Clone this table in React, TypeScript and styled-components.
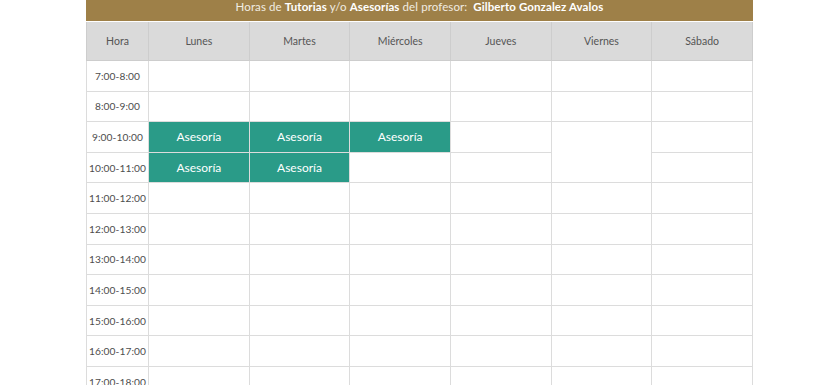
import * as React from 'react';
import styled, { createGlobalStyle } from 'styled-components';

const GlobalStyle = createGlobalStyle`
  html, body {
    margin: 0;
    padding: 0;
    background: #ffffff;
    overflow: hidden;
  }
  body {
    font-family: Lato, "Open Sans", "Liberation Sans", sans-serif;
    color: #4a4a4a;
  }
`;

const Page = styled.div`
  width: 667px;
  margin: 0 auto;
  padding-right: 1px;
`;

const TitleBar = styled.div`
  margin-top: -11px;
  height: 32px;
  background: #9e8048;
  color: #f1ece2;
  font-size: 11.5px;
  display: flex;
  align-items: center;
  justify-content: center;
  padding-top: 2px;
  box-sizing: border-box;
  letter-spacing: 0.1px;
`;

const Strong = styled.b`
  font-weight: 700;
  color: #ffffff;
`;

const Name = styled.b`
  font-weight: 700;
  color: #ffffff;
  margin-left: 6px;
`;

const Table = styled.table`
  width: 667px;
  border-collapse: collapse;
  table-layout: fixed;
  margin-top: 1px;
`;

const HeadCell = styled.th`
  height: 38px;
  padding: 0;
  background: #dadada;
  border: 1px solid #cdcdcd;
  border-top: none;
  font-weight: 400;
  font-size: 10.5px;
  color: #555;
  text-align: center;
`;

const HourCell = styled.td`
  height: 29.6px;
  padding: 0;
  border: 1px solid #dcdcdc;
  font-size: 10.2px;
  color: #4d4d4d;
  text-align: center;
  white-space: nowrap;
  letter-spacing: 0.1px;
`;

const SlotCell = styled.td<{ $busy?: boolean }>`
  padding: 0;
  border: 1px solid #dcdcdc;
  background: ${(p) => (p.$busy ? '#2a9b88' : '#ffffff')};
  color: #ffffff;
  font-size: 12px;
  text-align: center;
`;

const days = ['Lunes', 'Martes', 'Miércoles', 'Jueves', 'Viernes', 'Sábado'];

const hours = [
  '7:00-8:00',
  '8:00-9:00',
  '9:00-10:00',
  '10:00-11:00',
  '11:00-12:00',
  '12:00-13:00',
  '13:00-14:00',
  '14:00-15:00',
  '15:00-16:00',
  '16:00-17:00',
  '17:00-18:00',
];

// busy[hourIndex] = days with an Asesoría
const busy: Record<number, number[]> = {
  2: [0, 1, 2],
  3: [0, 1],
};

export default function App() {
  return (
    <>
      <GlobalStyle />
      <Page>
        <TitleBar>
          Horas de&nbsp;<Strong>Tutorias</Strong>&nbsp;y/o&nbsp;
          <Strong>Asesorías</Strong>&nbsp;del profesor:
          <Name>Gilberto Gonzalez Avalos</Name>
        </TitleBar>
        <Table>
          <colgroup>
            <col style={{ width: 62 }} />
            {days.map((d) => (
              <col key={d} />
            ))}
          </colgroup>
          <thead>
            <tr>
              <HeadCell>Hora</HeadCell>
              {days.map((d) => (
                <HeadCell key={d}>{d}</HeadCell>
              ))}
            </tr>
          </thead>
          <tbody>
            {hours.map((h, i) => (
              <tr key={h}>
                <HourCell>{h}</HourCell>
                {days.map((d, j) => {
                  // Viernes 9:00-11:00 is one merged block
                  if (j === 4 && i === 3) return null;
                  const isBusy = (busy[i] || []).includes(j);
                  return (
                    <SlotCell
                      key={d}
                      $busy={isBusy}
                      rowSpan={j === 4 && i === 2 ? 2 : undefined}
                    >
                      {isBusy ? 'Asesoría' : ''}
                    </SlotCell>
                  );
                })}
              </tr>
            ))}
          </tbody>
        </Table>
      </Page>
    </>
  );
}
